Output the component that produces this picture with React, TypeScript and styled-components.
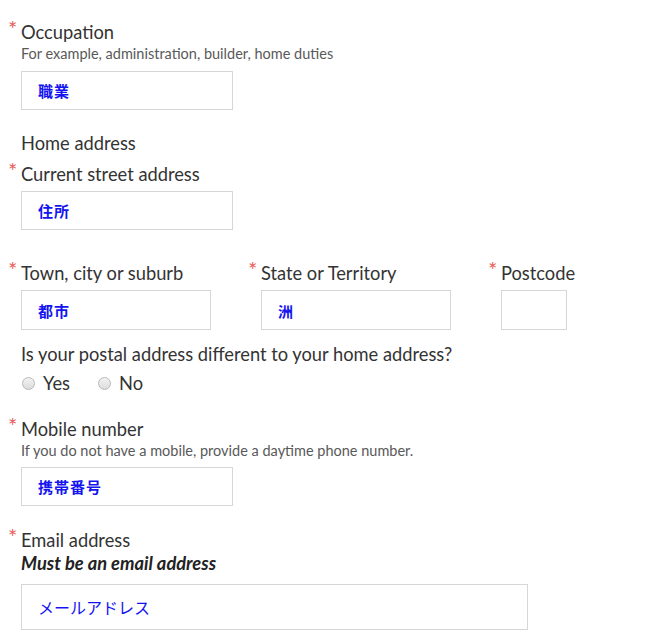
import styled, { createGlobalStyle } from "styled-components";

const GlobalStyle = createGlobalStyle`
  body {
    margin: 0;
    background: #ffffff;
    font-family: Lato, "Noto Sans", sans-serif;
    color: #333333;
  }
`;

const Form = styled.form`
  padding: 22px 0 0 8px;
  width: 662px;
  box-sizing: border-box;
`;

const Field = styled.div<{ $gap?: number }>`
  display: flex;
  align-items: flex-start;
  margin-top: ${(p) => p.$gap ?? 0}px;
`;

const Marker = styled.span`
  width: 13px;
  flex: none;
  color: #e8605a;
  font-size: 22px;
  line-height: 1;
  margin-top: -4px;
`;

const Body = styled.div`
  display: flex;
  flex-direction: column;
`;

const Label = styled.div`
  font-size: 18.3px;
  line-height: 20px;
  color: #333333;
`;

const Hint = styled.div<{ $gap?: number }>`
  font-size: 14.5px;
  line-height: 16px;
  color: #595959;
  margin-top: ${(p) => p.$gap ?? 4}px;
`;

const Rule = styled.div`
  font-size: 18.3px;
  line-height: 20px;
  font-weight: 700;
  font-style: italic;
  color: #222222;
  margin-top: 3px;
`;

const Input = styled.div<{ $width: number; $height?: number; $gap?: number; $plain?: boolean }>`
  box-sizing: border-box;
  width: ${(p) => p.$width}px;
  height: ${(p) => p.$height ?? 39}px;
  margin-top: ${(p) => p.$gap ?? 7}px;
  border: 1px solid #d6d6d6;
  background: #ffffff;
  display: flex;
  align-items: center;
  padding-left: 16px;
  color: #1414f0;
  font-family: "Noto Sans CJK JP", sans-serif;
  font-size: ${(p) => (p.$plain ? 16 : 15)}px;
  font-weight: ${(p) => (p.$plain ? 400 : 700)};
  letter-spacing: ${(p) => (p.$plain ? 0 : 1)}px;
`;

const Row = styled.div`
  display: grid;
  grid-template-columns: 240px 240px auto;
  margin-top: 33px;
`;

const Question = styled.div`
  font-size: 18.3px;
  line-height: 20px;
  color: #333333;
  margin: 14px 0 0 13px;
`;

const Choices = styled.div`
  display: flex;
  gap: 28px;
  margin: 9px 0 0 14px;
`;

const Choice = styled.label`
  display: flex;
  align-items: center;
  gap: 8px;
  font-size: 18.3px;
  line-height: 20px;
  color: #333333;
`;

const Dot = styled.span`
  box-sizing: border-box;
  width: 13px;
  height: 13px;
  border-radius: 50%;
  border: 1px solid #b9b9b9;
  background: linear-gradient(#f2f2f2, #dcdcdc);
`;

export default function App() {
  return (
    <>
      <GlobalStyle />
      <Form>
        <Field>
          <Marker>*</Marker>
          <Body>
            <Label>Occupation</Label>
            <Hint>For example, administration, builder, home duties</Hint>
            <Input $width={212} $gap={9}>職業</Input>
          </Body>
        </Field>

        <Field $gap={23}>
          <Marker />
          <Body>
            <Label>Home address</Label>
          </Body>
        </Field>

        <Field $gap={11}>
          <Marker>*</Marker>
          <Body>
            <Label>Current street address</Label>
            <Input $width={212}>住所</Input>
          </Body>
        </Field>

        <Row>
          <Field>
            <Marker>*</Marker>
            <Body>
              <Label>Town, city or suburb</Label>
              <Input $width={190} $height={40}>都市</Input>
            </Body>
          </Field>
          <Field>
            <Marker>*</Marker>
            <Body>
              <Label>State or Territory</Label>
              <Input $width={190} $height={40}>洲</Input>
            </Body>
          </Field>
          <Field>
            <Marker>*</Marker>
            <Body>
              <Label>Postcode</Label>
              <Input $width={66} $height={40} />
            </Body>
          </Field>
        </Row>

        <Question>Is your postal address different to your home address?</Question>
        <Choices>
          <Choice>
            <Dot />
            Yes
          </Choice>
          <Choice>
            <Dot />
            No
          </Choice>
        </Choices>

        <Field $gap={26}>
          <Marker>*</Marker>
          <Body>
            <Label>Mobile number</Label>
            <Hint>If you do not have a mobile, provide a daytime phone number.</Hint>
            <Input $width={212} $gap={8}>携帯番号</Input>
          </Body>
        </Field>

        <Field $gap={24}>
          <Marker>*</Marker>
          <Body>
            <Label>Email address</Label>
            <Rule>Must be an email address</Rule>
            <Input $width={507} $height={46} $gap={11} $plain>
              メールアドレス
            </Input>
          </Body>
        </Field>
      </Form>
    </>
  );
}
